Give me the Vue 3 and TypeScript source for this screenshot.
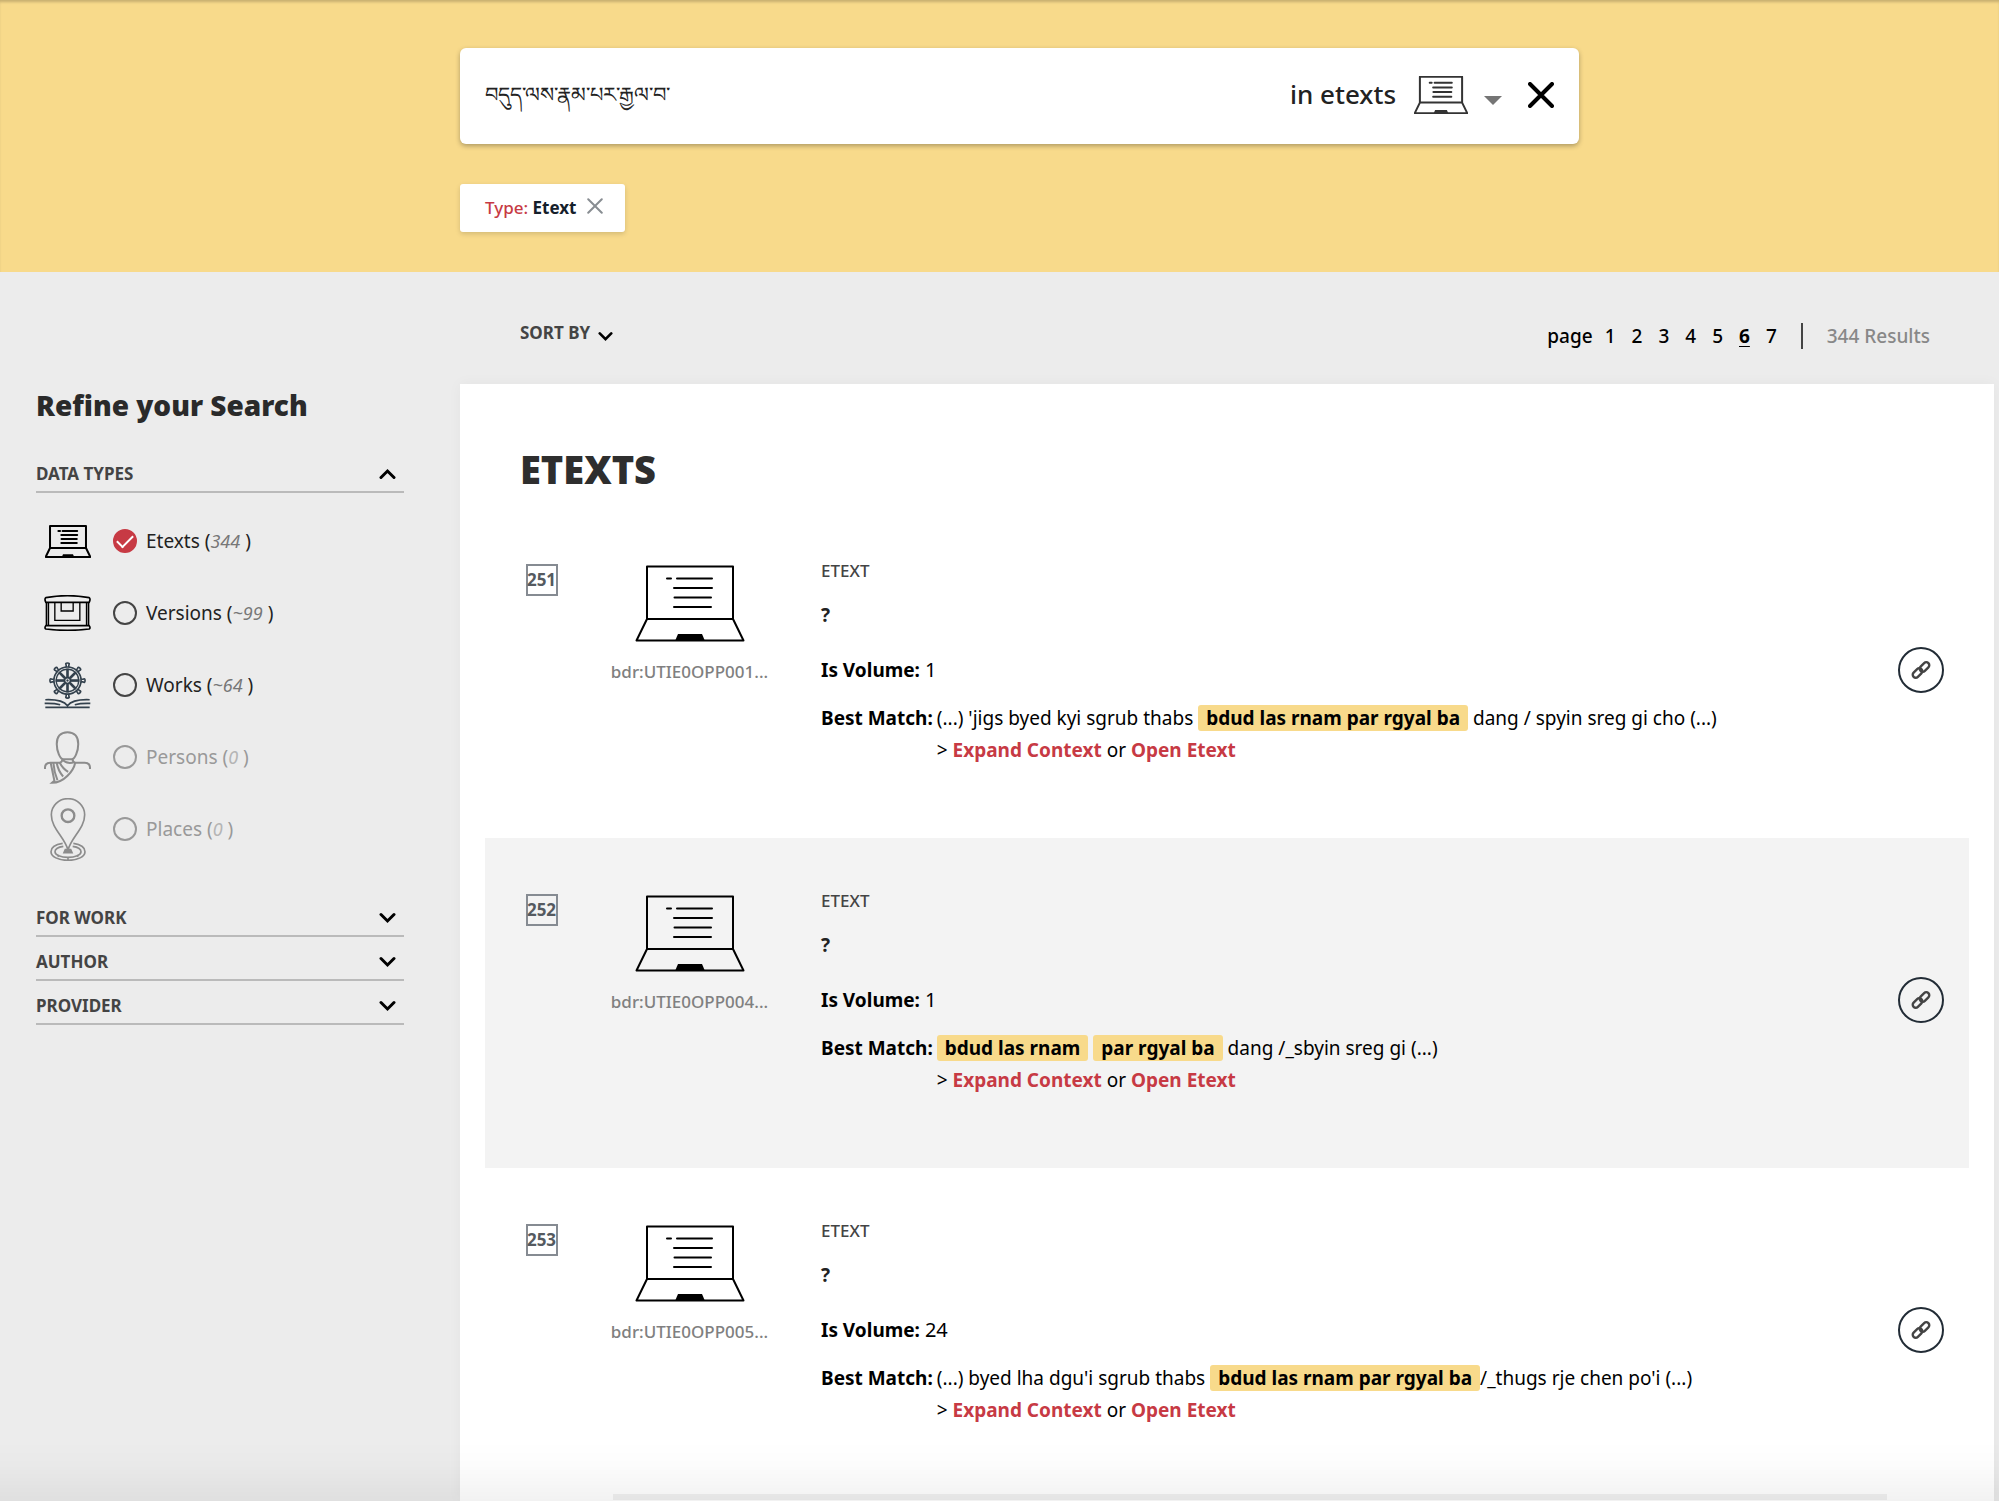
<script setup lang="ts">
import { ref } from 'vue'

interface DataType {
  id: string
  label: string
  count: string
  disabled: boolean
}

interface Segment {
  text: string
  hit: boolean
}

interface Result {
  index: number
  id: string
  volume: number
  match: Segment[]
}

const query = ref('བདུད་ལས་རྣམ་པར་རྒྱལ་བ་')
const scope = ref('etexts')
const selectedType = ref('etexts')
const currentPage = 6
const pages = [1, 2, 3, 4, 5, 6, 7]

const dataTypes: DataType[] = [
  { id: 'etexts', label: 'Etexts', count: '344', disabled: false },
  { id: 'versions', label: 'Versions', count: '~99', disabled: false },
  { id: 'works', label: 'Works', count: '~64', disabled: false },
  { id: 'persons', label: 'Persons', count: '0', disabled: true },
  { id: 'places', label: 'Places', count: '0', disabled: true },
]

const facets = ['For work', 'Author', 'Provider']
const spokes = [0, 45, 90, 135, 180, 225, 270, 315]

const results: Result[] = [
  {
    index: 251,
    id: 'bdr:UTIE0OPP001...',
    volume: 1,
    match: [
      { text: "(...) 'jigs byed kyi sgrub thabs ", hit: false },
      { text: 'bdud las rnam par rgyal ba', hit: true },
      { text: ' dang / spyin sreg gi cho (...)', hit: false },
    ],
  },
  {
    index: 252,
    id: 'bdr:UTIE0OPP004...',
    volume: 1,
    match: [
      { text: 'bdud las rnam', hit: true },
      { text: ' ', hit: false },
      { text: 'par rgyal ba', hit: true },
      { text: ' dang /_sbyin sreg gi (...)', hit: false },
    ],
  },
  {
    index: 253,
    id: 'bdr:UTIE0OPP005...',
    volume: 24,
    match: [
      { text: "(...) byed lha dgu'i sgrub thabs ", hit: false },
      { text: 'bdud las rnam par rgyal ba', hit: true },
      { text: "/_thugs rje chen po'i (...)", hit: false },
    ],
  },
]
</script>

<template>
  <div class="page">
    <svg class="sprite" aria-hidden="true">
      <symbol id="laptop" viewBox="0 0 110 77">
        <g fill="none" stroke="currentColor" stroke-linejoin="round">
          <path vector-effect="non-scaling-stroke" d="M12 54V1.500H98V54ZM12 54 1.500 75.500H108.500L98 54" />
          <path vector-effect="non-scaling-stroke" stroke-linecap="round" d="M32 13.500h4M42 13.500H77M39 23H77M39.500 32.500H76M39 42H76" />
        </g>
        <path d="M40 76 43 69H67L70 76Z" fill="currentColor" />
      </symbol>
      <symbol id="chevron" viewBox="0 0 17 12">
        <path d="M2 2.500 8.500 9 15 2.500" fill="none" stroke="currentColor" stroke-width="3" stroke-linecap="round" />
      </symbol>
      <symbol id="cross" viewBox="0 0 26 26">
        <path d="M2 2 24 24M24 2 2 24" fill="none" stroke="currentColor" vector-effect="non-scaling-stroke" stroke-linecap="round" />
      </symbol>
    </svg>

    <header class="banner">
      <form class="search" role="search" @submit.prevent>
        <input v-model="query" class="query" type="text" aria-label="Search" />
        <div class="scope">
          <select v-model="scope" aria-label="Search in">
            <option value="etexts">in etexts</option>
            <option value="versions">in versions</option>
          </select>
          <svg class="scope-laptop"><use href="#laptop" /></svg>
          <svg class="scope-caret" viewBox="0 0 18 9"><path d="M0 0H18L9 9Z" fill="currentColor" /></svg>
        </div>
        <button class="clear" type="button" aria-label="Clear search" @click="query = ''">
          <svg><use href="#cross" /></svg>
        </button>
      </form>
      <div class="chip">
        <span><span class="chip-key">Type:</span> <b>Etext</b></span>
        <button type="button" aria-label="Remove filter">
          <svg><use href="#cross" /></svg>
        </button>
      </div>
    </header>

    <div class="body">
      <aside class="sidebar">
        <h2>Refine your Search</h2>
        <button class="facet" type="button" aria-expanded="true">
          Data types <svg class="up"><use href="#chevron" /></svg>
        </button>
        <ul class="types">
          <li v-for="type in dataTypes" :key="type.id">
            <label :class="{ off: type.disabled }">
              <span class="type-icon">
                <svg v-if="type.id === 'etexts'" class="ic-laptop"><use href="#laptop" /></svg>
                <svg v-else-if="type.id === 'versions'" width="47" height="36" viewBox="0 0 140 108" fill="none" stroke="currentColor" stroke-width="5">
                  <path d="M5 22Q0 12 5 8Q70 -4 135 8Q140 12 135 22ZM7 22V92M133 22V92M5 92H135Q140 99 135 102Q70 110 5 102Q0 99 5 92Z" />
                  <path stroke-width="4" d="M13 22V92M127 22V92M32 22V76H107V22M51 22V48H87V22" />
                </svg>
                <svg v-else-if="type.id === 'works'" class="ic-works" width="47" height="47" viewBox="0 0 140 142" fill="none" stroke="currentColor">
                  <circle cx="70" cy="56" r="41" stroke-width="5" />
                  <circle cx="70" cy="56" r="34" stroke-width="4" />
                  <circle cx="70" cy="56" r="9" stroke-width="5" />
                  <circle cx="70" cy="56" r="3" fill="currentColor" />
                  <g v-for="angle in spokes" :key="angle" :transform="`rotate(${angle} 70 56)`">
                    <path stroke-width="8" d="M70 46V20" />
                    <path stroke-width="5" d="M66 15V9Q62 3 70 3Q78 3 74 9V15" />
                  </g>
                  <path stroke-width="5" d="M3 114Q55 112 70 132Q85 112 137 114M1 125Q30 124 48 129M139 125Q110 124 92 129M3 137H137" />
                </svg>
                <svg v-else-if="type.id === 'persons'" width="47" height="53" viewBox="0 0 140 157" fill="none" stroke="currentColor" stroke-width="6">
                  <path d="M70 3C48 3 38 18 38 38C38 60 48 84 58 84H82C92 84 102 60 102 38C102 18 92 3 70 3Z" />
                  <path d="M3 113V108Q4 94 19 94H47Q54 92 55 84M85 84Q86 92 93 94H121Q136 94 137 108V113" />
                  <path d="M93 94C88 118 60 154 24 154L31 148L20 95M47 94Q56 112 72 121M38 95Q42 118 57 135M28 95Q30 122 40 146M55 86Q72 100 90 92" />
                </svg>
                <svg v-else width="36" height="63" viewBox="0 0 106 189" fill="none" stroke="currentColor" stroke-width="5">
                  <path d="M53 156C42 116 3 92 3 50A50 48 0 0 1 103 50C103 92 64 116 53 156Z" />
                  <circle cx="53" cy="53" r="19" stroke-width="7" />
                  <path d="M37 136C17 139 2 147 2 161C2 176 24 187 53 187S104 176 104 161C104 147 89 139 69 136" />
                  <path d="M39 145C24 147 14 153 14 161C14 171 31 178 53 178S92 171 92 161C92 153 82 147 67 145M22 176 27 171M79 171 84 176M53 179V187" />
                  <path d="M45 155 41 164H65L61 155Z" fill="currentColor" />
                </svg>
              </span>
              <input v-model="selectedType" type="radio" name="data-type" :value="type.id" :disabled="type.disabled" />
              <span>{{ type.label }} (<i>{{ type.count }}</i>&nbsp;)</span>
            </label>
          </li>
        </ul>
        <button v-for="facet in facets" :key="facet" class="facet" type="button" aria-expanded="false">
          {{ facet }} <svg><use href="#chevron" /></svg>
        </button>
      </aside>

      <main class="content">
        <div class="toolbar">
          <button class="sort" type="button">Sort by <svg><use href="#chevron" /></svg></button>
          <div class="paging">
            <nav aria-label="Pages">
              <span>page</span>
              <div class="numbers">
                <a v-for="page in pages" :key="page" href="#" :class="{ current: page === currentPage }">{{ page }}</a>
              </div>
            </nav>
            <span class="total">344 Results</span>
          </div>
        </div>

        <section class="card">
          <h1>ETEXTS</h1>
          <article v-for="result in results" :key="result.index" class="result">
            <label class="pick">
              <input type="checkbox" />
              <span>{{ result.index }}</span>
            </label>
            <div class="thumb">
              <svg><use href="#laptop" /></svg>
              <span>{{ result.id }}</span>
            </div>
            <div class="details">
              <div class="kind">ETEXT</div>
              <h3>?</h3>
              <div class="volume"><b>Is Volume:</b> <span>{{ result.volume }}</span></div>
              <div class="match">
                <b>Best Match:</b>
                <div>
                  <p><template v-for="(part, i) in result.match" :key="i"><mark v-if="part.hit">{{ part.text }}</mark><template v-else>{{ part.text }}</template></template></p>
                  <p>&gt; <a href="#">Expand Context</a> or <a href="#">Open Etext</a></p>
                </div>
              </div>
            </div>
            <button class="link" type="button" aria-label="Copy link">
              <svg width="20" height="20" viewBox="0 0 20 20" fill="none" stroke="currentColor" stroke-width="2.400">
                <rect x="8" y="4" width="11" height="6" rx="3" transform="rotate(-45 13.500 7)" />
                <rect x="1" y="10" width="11" height="6" rx="3" transform="rotate(-45 6.500 13)" />
              </svg>
            </button>
          </article>
          <hr />
        </section>
      </main>
    </div>
    <div class="fade"></div>
  </div>
</template>

<style>
body {
  margin: 0;
  background: #ececec;
}
</style>

<style scoped>
.page {
  min-height: 100vh;
  display: flex;
  flex-direction: column;
  font-family: "Noto Sans", "Open Sans", sans-serif;
  font-size: 19px;
  line-height: 32px;
  color: #000;
}
.page * {
  box-sizing: border-box;
}
.sprite {
  position: absolute;
  width: 0;
  height: 0;
}
button,
input,
select {
  margin: 0;
  padding: 0;
  border: 0;
  background: none;
  font: inherit;
  color: inherit;
  appearance: none;
}
button {
  cursor: pointer;
}
svg {
  display: block;
  flex: none;
}

.banner {
  padding: 48px 420px 40px 460px;
  background: #f8da8b;
  box-shadow: inset 0 3px 3px -1px rgba(0, 0, 0, 0.2);
}
.search {
  display: flex;
  align-items: center;
  height: 96px;
  padding: 0 25px;
  border-radius: 6px;
  background: #fff;
  box-shadow: 0 2px 5px rgba(0, 0, 0, 0.3);
}
.query {
  flex: 1;
  min-width: 0;
  height: 60px;
  padding-top: 8px;
  font-size: 21px;
  font-weight: 500;
  color: #222;
  outline: none;
}
.scope {
  position: relative;
  margin-right: 26px;
}
.scope select {
  width: 212px;
  height: 60px;
  padding-bottom: 4px;
  font-size: 26px;
  font-weight: 500;
  color: #222;
}
.scope svg {
  position: absolute;
  pointer-events: none;
}
.scope-laptop {
  top: 10px;
  right: 34px;
  width: 54px;
  height: 38px;
  color: #333;
  stroke-width: 2;
}
.scope-caret {
  top: 30px;
  right: 0;
  width: 18px;
  height: 9px;
  color: #757575;
}
.clear svg {
  width: 26px;
  height: 26px;
  margin-bottom: 2px;
  stroke-width: 4;
}
.chip {
  display: inline-flex;
  align-items: center;
  gap: 11px;
  height: 48px;
  margin-top: 40px;
  padding: 0 22px 0 25px;
  border-radius: 3px;
  background: #fff;
  box-shadow: 0 2px 5px rgba(0, 0, 0, 0.15);
  font-size: 17px;
  font-weight: 500;
  color: #15202b;
  vertical-align: top;
}
.chip-key {
  color: #c73a44;
}
.chip b {
  font-weight: 700;
}
.chip svg {
  width: 16px;
  height: 16px;
  margin-bottom: 4px;
  stroke-width: 2;
  color: #888d92;
}

.body {
  flex: 1;
  display: flex;
}
.sidebar {
  flex: none;
  width: 460px;
  padding: 112px 56px 0 36px;
}
.sidebar h2 {
  margin: 0 0 23px;
  font-size: 28px;
  line-height: 42px;
  font-weight: 900;
  color: #2a2a2a;
}
.facet {
  display: flex;
  align-items: center;
  justify-content: space-between;
  width: 100%;
  height: 44px;
  padding: 8px 8px 0 0;
  border-bottom: 2px solid #bababa;
  font-size: 17px;
  font-weight: 700;
  text-transform: uppercase;
  color: #444;
}
.facet svg {
  width: 17px;
  height: 12px;
  color: #000;
}
.facet .up {
  transform: scaleY(-1);
}
.types {
  margin: 12px 0 28px;
  padding: 0;
  list-style: none;
}
.types label {
  display: flex;
  align-items: center;
  height: 72px;
  color: #222;
}
.types .off {
  color: #999;
}
.type-icon {
  display: flex;
  justify-content: center;
  width: 63px;
  margin-right: 14px;
  color: #000;
}
.off .type-icon {
  color: #8c8c8c;
}
.ic-laptop {
  width: 46px;
  height: 33px;
  stroke-width: 2;
}
.ic-works {
  color: #33414d;
}
.types input {
  display: grid;
  place-items: center;
  width: 24px;
  height: 24px;
  margin-right: 9px;
  border: 2px solid #444;
  border-radius: 50%;
}
.types .off input {
  border-color: #999;
}
.types input:checked {
  border-color: #c73a44;
  background: #c73a44;
}
.types input:checked::after {
  content: "";
  width: 14px;
  height: 7px;
  border-left: 2px solid #fff;
  border-bottom: 2px solid #fff;
  transform: translateY(-2px) rotate(-45deg);
}
.types i {
  font-size: 18px;
  color: #777;
}
.types .off i {
  color: #b5b5b5;
}

.content {
  flex: 1;
  min-width: 0;
  display: flex;
  flex-direction: column;
  padding-right: 5px;
}
.toolbar {
  display: flex;
  justify-content: space-between;
  align-items: center;
  height: 112px;
  padding: 16px 64px 0 60px;
}
.sort {
  display: flex;
  align-items: center;
  gap: 8px;
  margin-bottom: 6px;
  font-size: 17px;
  font-weight: 700;
  text-transform: uppercase;
  color: #444;
}
.sort svg {
  width: 15px;
  height: 11px;
  margin-top: 6px;
  color: #000;
}
.paging,
.paging nav,
.numbers {
  display: flex;
  align-items: center;
  font-weight: 500;
}
.paging nav {
  gap: 12px;
}
.numbers {
  gap: 16px;
}
.paging a {
  color: #000;
  text-decoration: none;
}
.paging .current {
  font-weight: 700;
  text-decoration: underline;
  text-underline-offset: 3px;
}
.total {
  margin-left: 24px;
  padding-left: 24px;
  border-left: 2px solid #444;
  line-height: 26px;
  color: #888;
}

.card {
  flex: 1;
  padding: 58px 25px 0;
  background: #fff;
  box-shadow: 0 0 14px rgba(0, 0, 0, 0.04);
}
h1 {
  margin: 0 0 12px;
  padding-left: 35px;
  font-size: 38px;
  line-height: 54px;
  font-weight: 900;
  color: #2e2e2e;
}
.result {
  display: flex;
  align-items: flex-start;
  height: 330px;
  padding: 56px 25px 0 40px;
}
.result:nth-of-type(even) {
  background: #f3f3f3;
}
.result:last-of-type {
  height: 326px;
}
.pick {
  display: grid;
  place-items: center;
  width: 33px;
  font-size: 17px;
  font-weight: 700;
  color: #555a60;
}
.pick > * {
  grid-area: 1 / 1;
}
.pick input {
  width: 32px;
  height: 32px;
  border: 2px solid #868b92;
}
.thumb {
  display: flex;
  flex-direction: column;
  align-items: center;
  gap: 14px;
  width: 263px;
  padding-top: 1px;
  font-size: 17px;
  font-weight: 500;
  color: #808080;
}
.thumb svg {
  width: 110px;
  height: 77px;
  color: #000;
  stroke-width: 2;
}
.details {
  flex: 1;
  min-width: 0;
}
.kind {
  margin-top: -9px;
  font-size: 17px;
  font-weight: 500;
  color: #444;
}
.details h3 {
  margin: 12px 0 23px;
  font-size: 19px;
  font-weight: 700;
  color: #222;
}
.volume {
  margin-bottom: 16px;
}
.volume span {
  font-size: 20px;
}
.match {
  display: flex;
  gap: 4px;
}
.match b {
  white-space: nowrap;
}
.match p {
  margin: 0;
}
.match mark {
  padding: 0 8px;
  border-radius: 3px;
  background: #f8da8b;
  color: #000;
  font-weight: 700;
}
.match a {
  color: #c73a44;
  font-weight: 700;
  text-decoration: none;
}
.link {
  display: grid;
  place-items: center;
  width: 46px;
  height: 46px;
  margin-top: 83px;
  border: 2px solid #222c36;
  border-radius: 50%;
  color: #444;
}
hr {
  height: 6px;
  margin: 0 82px 0 128px;
  border: 0;
  background: #f1f1f1;
}
.fade {
  position: fixed;
  right: 0;
  bottom: 0;
  left: 0;
  height: 60px;
  background: linear-gradient(rgba(0, 0, 0, 0), rgba(0, 0, 0, 0.01) 40%, rgba(0, 0, 0, 0.05));
  pointer-events: none;
}
</style>
